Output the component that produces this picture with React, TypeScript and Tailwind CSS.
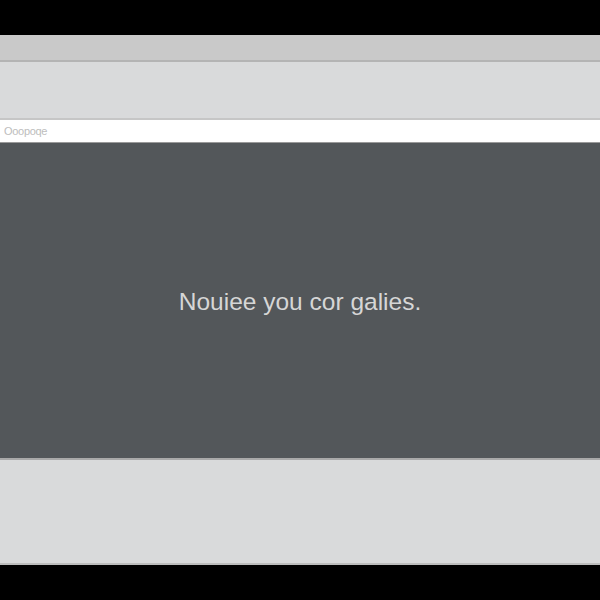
export default function App() {
  return (
    <div className="flex h-[600px] w-[600px] flex-col bg-black font-['Liberation_Sans',Arial,sans-serif]">
      {/* top letterbox */}
      <div className="h-[35px] shrink-0 bg-black" />

      {/* title bar */}
      <div className="h-[27px] shrink-0 border-b-2 border-[#b4b4b4] bg-[#c9c9c9]" />

      {/* toolbar area */}
      <div className="h-[58px] shrink-0 border-b-2 border-[#c6c6c6] bg-[#d9dadb]" />

      {/* address / search row */}
      <div className="flex h-[23px] shrink-0 items-center border-b border-[#9a9a9a] bg-white px-[4px]">
        <span className="text-[11px] leading-none tracking-[-0.3px] text-[#bdbdbd]">Ooopoqe</span>
      </div>

      {/* content */}
      <main className="flex h-[317px] shrink-0 items-center justify-center border-b-2 border-[#a9a9a9] bg-[#53575a]">
        <p className="pt-[3px] text-[24.5px] leading-none text-[#d6d6d6]">Nouiee you cor galies.</p>
      </main>

      {/* bottom panel */}
      <div className="h-[105px] shrink-0 border-b-2 border-[#bdbdbd] bg-[#d9dadb]" />

      {/* bottom letterbox */}
      <div className="flex-1 bg-black" />
    </div>
  );
}
